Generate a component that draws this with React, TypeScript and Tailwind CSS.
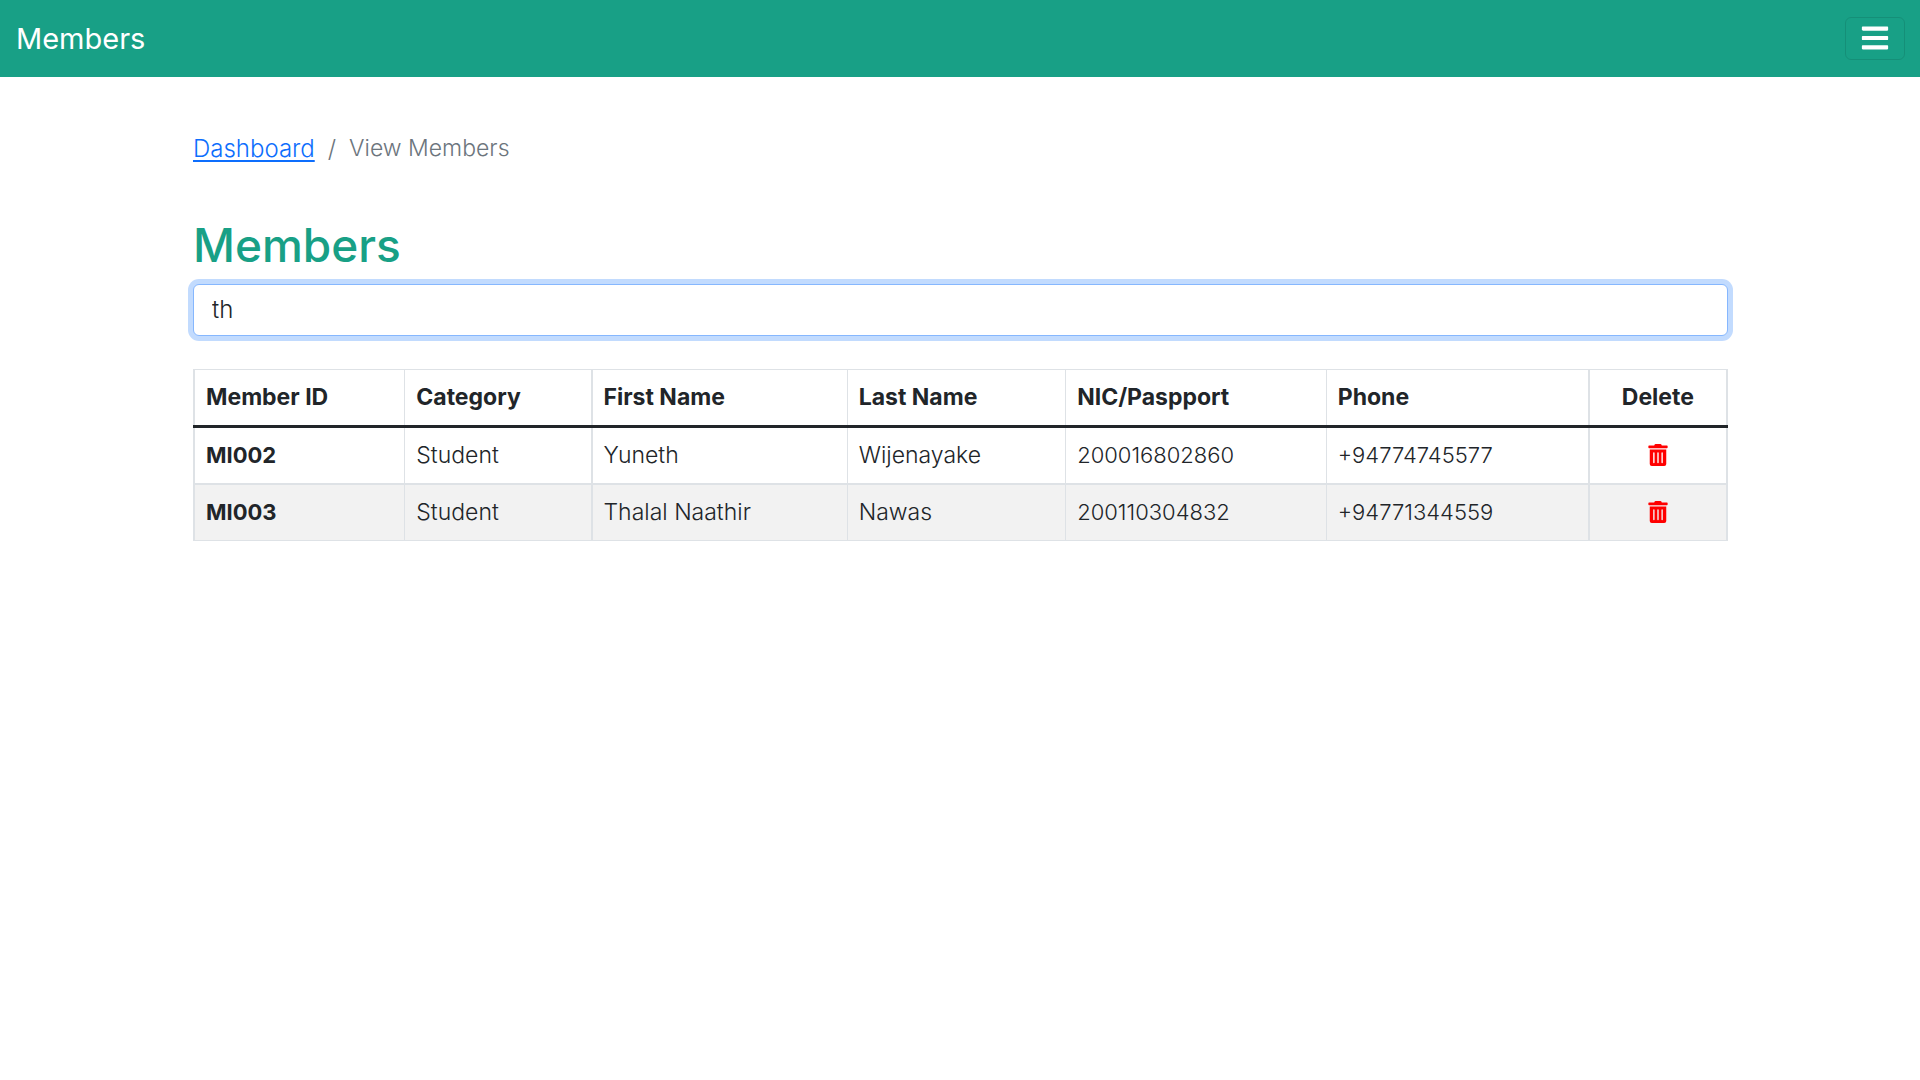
import { useState } from "react";
import { FaBars, FaTrashAlt } from "react-icons/fa";

const columns = [
  { label: "Member ID", width: "w-[13.75%]", border: "border-l-2" },
  { label: "Category", width: "w-[12.18%]", border: "border-l" },
  { label: "First Name", width: "w-[16.68%]", border: "border-l-2" },
  { label: "Last Name", width: "w-[14.25%]", border: "border-l" },
  { label: "NIC/Paspport", width: "w-[17%]", border: "border-l" },
  { label: "Phone", width: "w-[17.12%]", border: "border-l" },
  { label: "Delete", width: "w-[9.02%]", border: "border-x-2 text-center" },
];

const members = [
  { id: "MI002", cells: ["Student", "Yuneth", "Wijenayake", "200016802860", "+94774745577"] },
  { id: "MI003", cells: ["Student", "Thalal Naathir", "Nawas", "200110304832", "+94771344559"] },
];

function Navbar() {
  return (
    <header className="flex h-[77px] items-center justify-between bg-[#18a086] pr-[15px] pl-4">
      <a href="#" className="text-[29px] leading-[42px] font-normal text-white">
        Members
      </a>
      <button
        type="button"
        aria-label="Toggle navigation"
        className="flex h-[43px] w-[60px] items-center justify-center rounded-md border border-black/10 pb-0.5 text-[30px] text-white"
      >
        <FaBars />
      </button>
    </header>
  );
}

function MembersTable() {
  return (
    <table className="mt-[33px] w-full table-fixed border-collapse text-left text-[23px] leading-[33px]">
      <thead>
        <tr>
          {columns.map((c) => (
            <th
              key={c.label}
              scope="col"
              className={`${c.width} ${c.border} border-t border-b-3 border-[#dee2e6] border-b-[#212529] px-[11px] py-[11px] font-bold`}
            >
              {c.label}
            </th>
          ))}
        </tr>
      </thead>
      <tbody>
        {members.map((m, row) => {
          const last = row === members.length - 1;
          const line = last ? "border-b" : "border-b-2";
          return (
            <tr key={m.id} className={row % 2 ? "bg-[#f2f2f2]" : "bg-white"}>
              <th scope="row" className={`${columns[0].border} ${line} border-[#dee2e6] px-[11px] py-[11px] text-[22px] font-bold`}>
                {m.id}
              </th>
              {m.cells.map((text, i) => (
                <td
                  key={text}
                  className={`${columns[i + 1].border} ${line} ${i > 2 ? "text-[22px]" : "text-[23px]"} border-[#dee2e6] px-[11px] py-[11px]`}
                >
                  {text}
                </td>
              ))}
              <td className={`${columns[6].border} ${line} border-[#dee2e6] px-[11px] py-[11px] align-top text-[22px]`}>
                <button type="button" aria-label={`Delete ${m.id}`} className="mx-auto flex h-[31px] items-center text-[#ff0000]">
                  <FaTrashAlt />
                </button>
              </td>
            </tr>
          );
        })}
      </tbody>
    </table>
  );
}

export default function App() {
  const [query, setQuery] = useState("th");
  return (
    <div className="min-h-screen bg-white font-['Inter',sans-serif] font-light text-[#212529]">
      <Navbar />
      <main className="mx-auto w-4/5 pt-[55px] pl-px">
        <nav aria-label="Breadcrumb">
          <ol className="flex gap-[13px] text-[24px] leading-[33px]">
            <li>
              <a href="#" className="text-[#0d6efd] underline decoration-2 underline-offset-3">
                Dashboard
              </a>
            </li>
            <li aria-hidden="true" className="text-[#6c757d]">/</li>
            <li aria-current="page" className="text-[23px] text-[#6c757d]">View Members</li>
          </ol>
        </nav>
        <h1 className="mt-[53px] text-[46px] leading-[54px] font-medium text-[#18a086]">Members</h1>
        <input
          type="text"
          aria-label="Search members"
          value={query}
          onChange={(e) => setQuery(e.target.value)}
          className="mt-3 block h-[52px] w-full rounded-md border border-[#86b7fe] bg-white px-[18px] pb-0.5 text-[24px] leading-[33px] ring-5 ring-[#c2dbfe] outline-none"
        />
        <MembersTable />
      </main>
    </div>
  );
}
